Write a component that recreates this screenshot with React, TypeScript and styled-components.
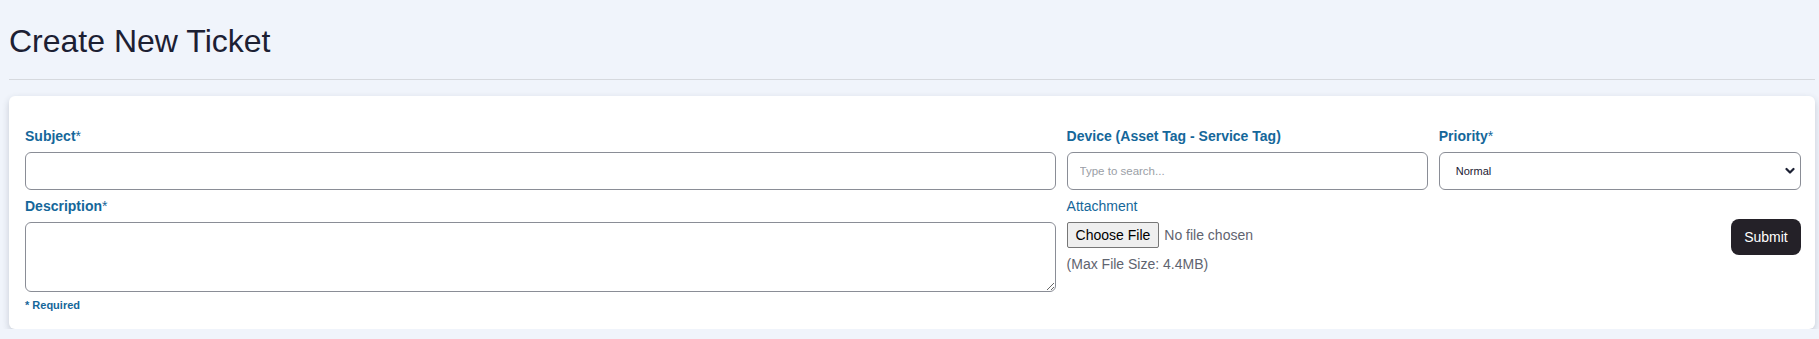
import styled, { createGlobalStyle } from 'styled-components';

const GlobalStyle = createGlobalStyle`
  body {
    margin: 0;
    background: #f0f4fb;
    font-family: "Liberation Sans", Arial, sans-serif;
  }
  * {
    box-sizing: border-box;
  }
`;

const Page = styled.div`
  padding: 0 4px 0 9px;
`;

const Title = styled.h1`
  margin: 0;
  padding-top: 22px;
  font-size: 32px;
  font-weight: 400;
  line-height: 1.2;
  color: #1c2033;
`;

const Divider = styled.hr`
  margin: 19px 0 16px;
  border: 0;
  border-top: 1px solid #d6d9de;
`;

const Card = styled.div`
  display: grid;
  grid-template-columns: 1030fr 361fr 362fr;
  column-gap: 11px;
  align-items: start;

  padding: 30px 14px 16px 16px;
  border-radius: 6px;
  background: #ffffff;
  box-shadow: 0 3px 7px rgba(30, 40, 60, 0.2);
`;

const Column = styled.div`
  display: flex;
  flex-direction: column;
`;

const Label = styled.label<{ $bold?: boolean }>`
  display: block;
  margin-bottom: 6px;
  font-size: 14px;
  line-height: 20px;
  font-weight: ${(p) => (p.$bold ? 700 : 400)};
  color: #15679a;
`;

const Star = styled.span`
  font-weight: 400;
`;

const Field = styled.div`
  & + & {
    margin-top: 6px;
  }
`;

const TextInput = styled.input`
  display: block;
  width: 100%;
  height: 38px;
  padding: 0 12px;
  border: 1px solid #8a8d96;
  border-radius: 6px;
  font-family: inherit;
  font-size: 11.5px;
  color: #1c2033;
  background: #fff;

  &::placeholder {
    color: #9a9ea6;
  }
`;

const TextArea = styled.textarea`
  display: block;
  width: 100%;
  height: 70px;
  padding: 8px 12px;
  border: 1px solid #8a8d96;
  border-radius: 6px;
  font-family: inherit;
  font-size: 14px;
  resize: vertical;
`;

const Note = styled.div`
  margin-top: 5px;
  font-size: 11px;
  line-height: 16px;
  font-weight: 700;
  color: #15679a;
`;

const SelectWrap = styled.div`
  position: relative;

  svg {
    position: absolute;
    right: 6px;
    top: 15px;
    pointer-events: none;
  }
`;

const Select = styled.select`
  display: block;
  width: 100%;
  height: 38px;
  padding: 0 30px 0 16px;
  border: 1px solid #8a8d96;
  border-radius: 6px;
  appearance: none;
  background: #fff;
  font-family: inherit;
  font-size: 11px;
  color: #1c2033;
`;

const FileInput = styled.input`
  display: block;
  font-family: inherit;
  font-size: 14px;
  color: #5f6470;

  &::file-selector-button {
    height: 26px;
    margin-right: 5px;
    padding: 0 8px;
    border: 1px solid #767676;
    border-radius: 2px;
    background: #efefef;
    font-family: inherit;
    font-size: 14px;
    color: #000;
  }
`;

const Hint = styled.div`
  margin-top: 6px;
  font-size: 14px;
  line-height: 20px;
  color: #5f6470;
`;

const SubmitButton = styled.button`
  align-self: flex-end;
  margin-top: 29px;
  width: 70px;
  height: 36px;
  border: 0;
  border-radius: 8px;
  background: #242128;
  color: #fff;
  font-family: inherit;
  font-size: 14px;
  cursor: pointer;
`;

export default function App() {
  return (
    <>
      <GlobalStyle />
      <Page>
        <Title>Create New Ticket</Title>
        <Divider />
        <Card>
          <Column>
            <Field>
              <Label $bold>
                Subject<Star>*</Star>
              </Label>
              <TextInput type="text" />
            </Field>
            <Field>
              <Label $bold>
                Description<Star>*</Star>
              </Label>
              <TextArea />
            </Field>
            <Note>* Required</Note>
          </Column>

          <Column>
            <Field>
              <Label $bold>Device (Asset Tag - Service Tag)</Label>
              <TextInput type="text" placeholder="Type to search..." />
            </Field>
            <Field>
              <Label>Attachment</Label>
              <FileInput type="file" />
              <Hint>(Max File Size: 4.4MB)</Hint>
            </Field>
          </Column>

          <Column>
            <Field>
              <Label $bold>
                Priority<Star>*</Star>
              </Label>
              <SelectWrap>
                <Select defaultValue="normal">
                  <option value="low">Low</option>
                  <option value="normal">Normal</option>
                  <option value="high">High</option>
                  <option value="urgent">Urgent</option>
                </Select>
                <svg width="10" height="8" viewBox="0 0 10 8">
                  <path
                    d="M1.5 2 L5 5.5 L8.5 2"
                    fill="none"
                    stroke="#1c2033"
                    strokeWidth="2.2"
                    strokeLinecap="round"
                    strokeLinejoin="round"
                  />
                </svg>
              </SelectWrap>
            </Field>
            <SubmitButton type="button">Submit</SubmitButton>
          </Column>
        </Card>
      </Page>
    </>
  );
}
